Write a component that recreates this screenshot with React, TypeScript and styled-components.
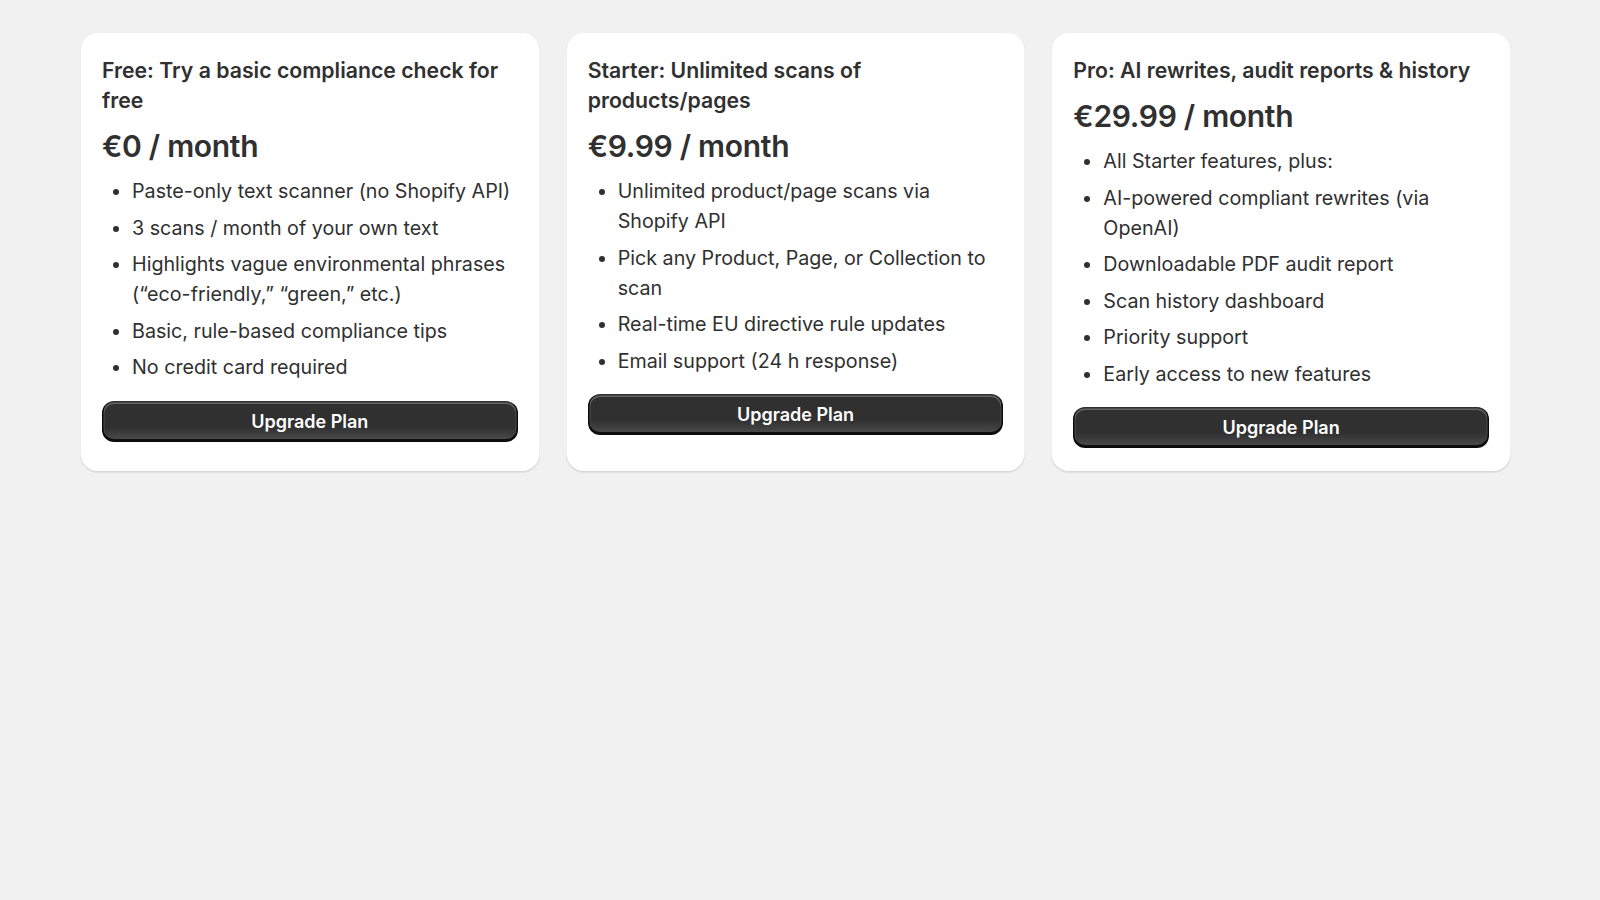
import styled, { createGlobalStyle } from 'styled-components';

interface Plan {
	id: string;
	title: string;
	price: string;
	features: string[];
}

const plans: Plan[] = [
	{
		id: 'free',
		title: 'Free: Try a basic compliance check for free',
		price: '€0 / month',
		features: [
			'Paste-only text scanner (no Shopify API)',
			'3 scans / month of your own text',
			'Highlights vague environmental phrases (“eco-friendly,” “green,” etc.)',
			'Basic, rule-based compliance tips',
			'No credit card required',
		],
	},
	{
		id: 'starter',
		title: 'Starter: Unlimited scans of products/pages',
		price: '€9.99 / month',
		features: [
			'Unlimited product/page scans via Shopify API',
			'Pick any Product, Page, or Collection to scan',
			'Real-time EU directive rule updates',
			'Email support (24 h response)',
		],
	},
	{
		id: 'pro',
		title: 'Pro: AI rewrites, audit reports & history',
		price: '€29.99 / month',
		features: [
			'All Starter features, plus:',
			'AI-powered compliant rewrites (via OpenAI)',
			'Downloadable PDF audit report',
			'Scan history dashboard',
			'Priority support',
			'Early access to new features',
		],
	},
];

const GlobalStyle = createGlobalStyle`
	html, body {
		margin: 0;
		padding: 0;
		background: #f1f1f1;
	}
	body {
		font-family: Inter, "Noto Sans", sans-serif;
		color: #303030;
		-webkit-font-smoothing: antialiased;
	}
`;

const Page = styled.div`
	min-height: 100vh;
	padding: 32px 89px 0 80px;
	box-sizing: border-box;
`;

const PlanGrid = styled.div`
	display: grid;
	grid-template-columns: repeat( 3, 1fr );
	gap: 26px;
	align-items: stretch;
`;

const Card = styled.div`
	background: #fff;
	border-radius: 18px;
	padding: 23px 22px 24px;
	box-shadow: 0 1px 0 0 rgba( 26, 26, 26, 0.07 ),
		inset 0 0 0 1px rgba( 0, 0, 0, 0.06 ),
		inset 0 -1px 0 0 rgba( 0, 0, 0, 0.1 );
	display: flex;
	flex-direction: column;
	gap: 12px;
`;

const PlanTitle = styled.h2`
	margin: 0 0 1px;
	font-size: 21.25px;
	line-height: 30px;
	font-weight: 600;
	color: #303030;
`;

const Price = styled.p`
	margin: 0;
	font-size: 30px;
	line-height: 36px;
	font-weight: 600;
	letter-spacing: -0.3px;
	color: #303030;
`;

const FeatureList = styled.ul`
	margin: 0;
	padding-left: 30px;
	list-style: disc;
`;

const Feature = styled.li`
	font-size: 19.7px;
	line-height: 30px;
	font-weight: 400;
	margin-bottom: 6.5px;
	color: #303030;
`;

const UpgradeButton = styled.button`
	width: 100%;
	height: 41px;
	border: none;
	border-radius: 12px;
	font-family: Inter, "Noto Sans", sans-serif;
	font-size: 18px;
	font-weight: 600;
	color: #fff;
	cursor: pointer;
	background: linear-gradient(
			180deg,
			rgba( 48, 48, 48, 0 ) 63.53%,
			rgba( 255, 255, 255, 0.15 ) 100%
		),
		#303030;
	box-shadow: inset 0 -1.5px 0 1.5px rgba( 0, 0, 0, 0.8 ),
		inset 0 0 0 1.5px #303030,
		inset 0 0.75px 0 2.25px rgba( 255, 255, 255, 0.25 );
`;

export default function App() {
	return (
		<>
			<GlobalStyle />
			<Page>
				<PlanGrid>
					{ plans.map( ( plan ) => (
						<Card key={ plan.id }>
							<PlanTitle>{ plan.title }</PlanTitle>
							<Price>{ plan.price }</Price>
							<FeatureList>
								{ plan.features.map( ( feature ) => (
									<Feature key={ feature }>{ feature }</Feature>
								) ) }
							</FeatureList>
							<UpgradeButton>Upgrade Plan</UpgradeButton>
						</Card>
					) ) }
				</PlanGrid>
			</Page>
		</>
	);
}
